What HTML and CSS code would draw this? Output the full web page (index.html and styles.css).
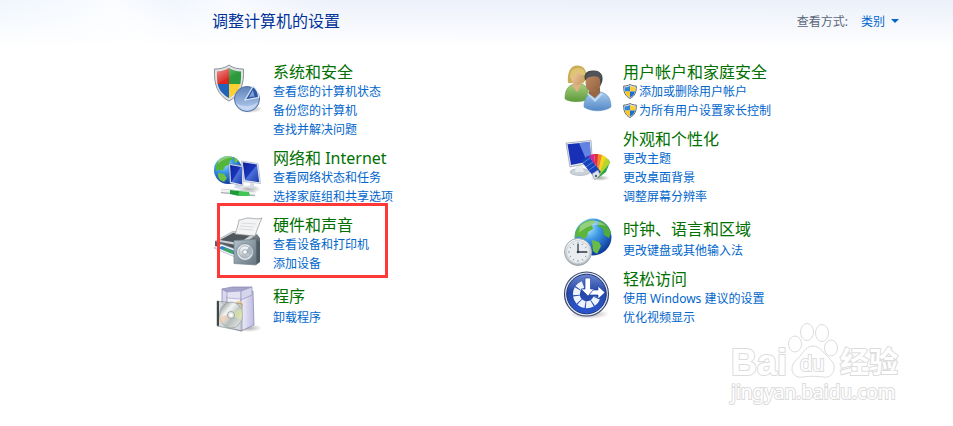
FILE: index.html
```html
<!DOCTYPE html>
<html lang="zh-CN">
<head>
    <meta charset="utf-8">
    <link rel="stylesheet" href="styles.css">
    <title>控制面板</title>
</head>
<body>
    <!-- Shared gradients and the small shield -->
    <svg class="defs" width="0" height="0" aria-hidden="true">
        <defs>
            <radialGradient id="globe" cx="35%" cy="25%" r="80%">
                <stop offset="0" stop-color="#b8ecff"/>
                <stop offset=".4" stop-color="#3f9be6"/>
                <stop offset="1" stop-color="#0b3597"/>
            </radialGradient>
            <linearGradient id="screen" x1="0" y1="0" x2="1" y2="1">
                <stop offset="0" stop-color="#10209a"/>
                <stop offset=".48" stop-color="#1a35ba"/>
                <stop offset=".52" stop-color="#4a70d8"/>
                <stop offset="1" stop-color="#1c3aac"/>
            </linearGradient>
            <linearGradient id="metal" x1="0" y1="0" x2="0" y2="1">
                <stop offset="0" stop-color="#fdfdfe"/>
                <stop offset="1" stop-color="#a9b2bb"/>
            </linearGradient>
            <radialGradient id="shadow">
                <stop offset="0" stop-color="#555" stop-opacity=".5"/>
                <stop offset="1" stop-color="#555" stop-opacity="0"/>
            </radialGradient>
            <symbol id="uac" viewBox="0 0 14 15">
                <path d="M7 .5C9 1.600 11 2 13.300 2c.2 6-1.300 10-6.300 12.500C2 12 .5 8 .7 2 3 2 5 1.600 7 .5z" fill="#dfe4e8" stroke="#656d75"/>
                <path d="M7 2v5.500H2C1.700 6 1.700 4.800 1.700 3.300 4 3.200 5.500 3 7 2z" fill="#2f86dc"/>
                <path d="M7 2v5.500h5c.3-1.500.3-2.700.3-4.200C10 3.200 8.500 3 7 2z" fill="#fdd030"/>
                <path d="M7 7.500v6C4 12 2.500 10 2 7.500z" fill="#fcc61d"/>
                <path d="M7 7.500v6c3-1.500 4.500-3.500 5-6z" fill="#1b6fcb"/>
            </symbol>
        </defs>
    </svg>

    <header class="header">
        <h1>调整计算机的设置</h1>
        <div class="view">
            <label for="viewBy">查看方式:</label>
            <div class="picker">
                <select id="viewBy">
                    <option>类别</option>
                    <option>大图标</option>
                    <option>小图标</option>
                </select>
                <svg class="arrow" width="8" height="4" viewBox="0 0 8 4"><path d="M0 0h8L4 4z" fill="#0066cc"/></svg>
            </div>
        </div>
    </header>

    <main class="categories">
        <div class="column">
            <section class="category">
                <svg class="icon" viewBox="0 0 48 48">
                    <defs>
                        <linearGradient id="disc" x1="0" y1="0" x2="0" y2="1"><stop offset="0" stop-color="#5f82b8"/><stop offset="1" stop-color="#b7d0f1"/></linearGradient>
                        <linearGradient id="gloss" x1="0" y1="0" x2="1" y2="1"><stop offset="0" stop-color="#fff" stop-opacity=".5"/><stop offset=".6" stop-color="#fff" stop-opacity="0"/></linearGradient>
                    </defs>
                    <ellipse cx="37" cy="45" rx="13" ry="4" fill="url(#shadow)"/>
                    <path d="M16 1c4 3 9 4 14.500 4 .8 15-3 26-14.500 32C4.500 31 .7 20 1.500 5 7 5 12 4 16 1z" fill="#dfe2e5" stroke="#8b9196"/>
                    <path d="M16 4v16H4.600C4 16 3.800 12 4 7.500 8.500 7.300 12.500 6.200 16 4z" fill="#da2722"/>
                    <path d="M16 4v16h11.400c.6-4 .8-8 .6-12.500C23.500 7.300 19.500 6.200 16 4z" fill="#2c9a3c"/>
                    <path d="M16 20v14C9.500 30.500 6 26 4.600 20z" fill="#1f63bb"/>
                    <path d="M16 20v14c6.500-3.500 10-8 11.400-14z" fill="#fbd033"/>
                    <path d="M16 4c3.500 2.200 7.500 3.300 12 3.500C20 12 9 17 4.500 20 3.800 16 3.800 12 4 7.500 8.500 7.300 12.500 6.200 16 4z" fill="url(#gloss)"/>
                    <circle cx="34" cy="35" r="12.500" fill="url(#disc)" stroke="#5370a3"/>
                    <path d="M23 39c6 4 16 4 22-1-2 5-6 8-11 8s-9-3-11-7z" fill="#d6e5fa" opacity=".6"/>
                    <path d="M32 36l8-13.500c3 2 5.500 6 5.500 11z" fill="#2e55a2" stroke="#dce9fb" stroke-width="1.200"/>
                    <path d="M36 33l4-7 1.500 6.500z" fill="#7d9fd7"/>
                </svg>
                <div class="text">
                    <h2><a href="#">系统和安全</a></h2>
                    <ul>
                        <li><a href="#">查看您的计算机状态</a></li>
                        <li><a href="#">备份您的计算机</a></li>
                        <li><a href="#">查找并解决问题</a></li>
                    </ul>
                </div>
            </section>

            <section class="category">
                <svg class="icon" viewBox="0 0 48 48">
                    <ellipse cx="36" cy="39" rx="12" ry="4" fill="url(#shadow)"/>
                    <circle cx="15" cy="20" r="14" fill="url(#globe)"/>
                    <path d="M5 11c3-4 8-5.500 13-4.500l3 2-4 2-1 4-4 2-2 4-4-1-3 2c-1-4 0-7 2-10.500z" fill="#55b53b"/>
                    <path d="M5 23l6 1 3 4-3 4-4-2c-2-2-2-4-2-7zM21 7l5 4-4 2z" fill="#6cc243"/>
                    <path d="M5 9c5-5 13-5 18-2-6 0-13 2-18 7z" fill="#fff" opacity=".3"/>
                    <path d="M23 34l5 2v3l-7-1z" fill="#d5dce5"/>
                    <path d="M16 14l14 2v20l-13-3z" fill="#f3f6fa" stroke="#7f8dac" stroke-width=".5"/>
                    <path d="M17 15l12 2v17.500L18 32z" fill="url(#screen)"/>
                    <path d="M37 33l4 .6v3l4 1-8 1-4-1 4-1z" fill="#d5dce5"/>
                    <path d="M28.500 11L45 13.500l2.500 20L31 31.500z" fill="#f3f6fa" stroke="#7f8dac" stroke-width=".5"/>
                    <path d="M29.700 12.300L44 14.500l2.200 17.700L32 30.300z" fill="url(#screen)"/>
                    <path d="M8 41l12 1 22 2" fill="none" stroke="#a3aeb3" stroke-width="4.500"/>
                    <path d="M8 40.500l12 1 22 2" fill="none" stroke="#edf1f2" stroke-width="3"/>
                    <path d="M17 40l9 1 3 2-3 3-9-2z" fill="#1c9c38"/>
                    <path d="M27 41l9 1 1 4-10 0-2-2z" fill="#43c457"/>
                </svg>
                <div class="text">
                    <h2><a href="#">网络和 Internet</a></h2>
                    <ul>
                        <li><a href="#">查看网络状态和任务</a></li>
                        <li><a href="#">选择家庭组和共享选项</a></li>
                    </ul>
                </div>
            </section>

            <section class="category marked">
                <svg class="icon" viewBox="0 0 48 48">
                    <defs>
                        <linearGradient id="body" x1="0" y1="0" x2="0" y2="1"><stop offset="0" stop-color="#8b949b"/><stop offset="1" stop-color="#353b41"/></linearGradient>
                        <linearGradient id="box" x1="0" y1="0" x2="1" y2="1"><stop offset="0" stop-color="#b3c1cb"/><stop offset="1" stop-color="#64747f"/></linearGradient>
                    </defs>
                    <path d="M2 24L20 14l24 3 3 4v10l-10 4L2 29z" fill="url(#body)"/>
                    <path d="M2 24L20 14l24 3-16 12z" fill="#c9ced2"/>
                    <path d="M7 23l13-7 18 2-12 8z" fill="#50575d"/>
                    <path d="M1 31l7-4 14 5v8z" fill="#f4f6f7" stroke="#9ba1a6" stroke-width=".6"/>
                    <path d="M5 31l4-2 13 5v4z" fill="#2b7dcc"/>
                    <path d="M12 31l8 3v3l-10-4z" fill="#43a757"/>
                    <path d="M26 3c3 0 6-2 9-2 5 0 9 2 14 0-3 6-5 12-7 18l-20-2c2-5 3-9 4-14z" fill="#f4f4f4" stroke="#8d9499" stroke-width=".7"/>
                    <path d="M28 6l15 1M27 9l14 1M26 12l14 1" stroke="#d9dde0"/>
                    <path d="M43 23l4 2v20l-4 3z" fill="#4e5b64"/>
                    <path d="M21 23.500l22-1V48l-22-1.500z" fill="url(#box)" stroke="#74828c" stroke-width=".7"/>
                    <circle cx="32" cy="35" r="8.500" fill="#dce2e6" stroke="#7f8d96"/>
                    <circle cx="32" cy="35" r="6" fill="url(#metal)" stroke="#9da8b0" stroke-width=".7"/>
                    <path d="M32 35l5-6c3 3 3 7 1 9z" fill="#aab5be"/>
                    <circle cx="32" cy="35" r="2.300" fill="#f9fafb" stroke="#7b8891" stroke-width=".6"/>
                </svg>
                <div class="text">
                    <h2><a href="#">硬件和声音</a></h2>
                    <ul>
                        <li><a href="#">查看设备和打印机</a></li>
                        <li><a href="#">添加设备</a></li>
                    </ul>
                </div>
            </section>

            <section class="category single">
                <svg class="icon" viewBox="0 0 48 48">
                    <defs>
                        <linearGradient id="cd" x1="0" y1="0" x2="1" y2="1"><stop offset="0" stop-color="#6d7578"/><stop offset=".35" stop-color="#f3f5f3"/><stop offset=".6" stop-color="#b5bdba"/><stop offset="1" stop-color="#f6f7f5"/></linearGradient>
                        <linearGradient id="carton" x1="0" y1="0" x2="1" y2="0"><stop offset="0" stop-color="#f0effa"/><stop offset="1" stop-color="#bdbbe0"/></linearGradient>
                    </defs>
                    <ellipse cx="35" cy="44" rx="14" ry="4" fill="url(#shadow)"/>
                    <path d="M9 5l7 3v12H9z" fill="#d8d7ee" stroke="#8e8db5" stroke-width=".8"/>
                    <path d="M9 5l10-2 20 0-13 5-10 1z" fill="#a5a4cb" stroke="#8e8db5" stroke-width=".8"/>
                    <path d="M14 12l14 1V47l-14-4z" fill="#f3f2fb" stroke="#8e8db5" stroke-width=".8"/>
                    <path d="M28 13l12-6 1 34-13 6z" fill="url(#carton)" stroke="#8e8db5" stroke-width=".8"/>
                    <path d="M14 8l14-1v8l-14-1z" fill="#e3e2f3" stroke="#9a99c0" stroke-width=".6"/>
                    <path d="M28 7l11-4v8l-11 5z" fill="#d5d4ec" stroke="#9a99c0" stroke-width=".8"/>
                    <circle cx="26" cy="21" r="4" fill="#f0c587" opacity=".8"/>
                    <path d="M4 17l25 3v27L4 42z" fill="#c7cecf" opacity=".75" stroke="#747d80" stroke-width=".8"/>
                    <path d="M4 17l2 .3V42l-2-.4z" fill="#3f4749"/>
                    <ellipse cx="18" cy="31" rx="11.500" ry="13" fill="url(#cd)" stroke="#8d9696" stroke-width=".6"/>
                    <path d="M18 31l10-7c2 4 2 8 0 12z" fill="#dfe9a5" opacity=".65"/>
                    <path d="M18 31L9 40c-2-2-3-5-2.500-8z" fill="#f4c6a5" opacity=".6"/>
                    <circle cx="18" cy="31" r="3.500" fill="#e8ebeb" stroke="#8d9696" stroke-width=".8"/>
                    <circle cx="18" cy="31" r="1.200" fill="#fff"/>
                </svg>
                <div class="text">
                    <h2><a href="#">程序</a></h2>
                    <ul>
                        <li><a href="#">卸载程序</a></li>
                    </ul>
                </div>
            </section>
        </div>

        <div class="column">
            <section class="category">
                <svg class="icon" viewBox="0 0 48 48">
                    <defs>
                        <linearGradient id="green" x1="0" y1="0" x2="0" y2="1"><stop offset="0" stop-color="#a8cf7c"/><stop offset="1" stop-color="#5c9a3a"/></linearGradient>
                        <linearGradient id="blue" x1="0" y1="0" x2="0" y2="1"><stop offset="0" stop-color="#a7cbee"/><stop offset="1" stop-color="#5389c6"/></linearGradient>
                        <linearGradient id="face" x1="0" y1="0" x2="1" y2="1"><stop offset="0" stop-color="#f7d9b3"/><stop offset="1" stop-color="#c7935e"/></linearGradient>
                        <linearGradient id="tan" x1="0" y1="0" x2="1" y2="1"><stop offset="0" stop-color="#c08c62"/><stop offset="1" stop-color="#8f6040"/></linearGradient>
                    </defs>
                    <path d="M2 35c0-8 2-13 9-15h8c5 2 7 7 7 15-6 3-18 4-24 0z" fill="url(#green)" stroke="#6a9a48" stroke-width=".6"/>
                    <path d="M5 19C4 9 7 1 15 1.500c7 .5 9 6 8 14l-3 4z" fill="#c9ad58"/>
                    <path d="M10 19h8l-1 5-3 4-4-5z" fill="#ddb184"/>
                    <ellipse cx="14" cy="13" rx="6" ry="8" fill="url(#face)"/>
                    <path d="M7 14c0-8 4-10 9-10 4 0 6 3 6 7-5 0-7-2-8-4-1 4-3 6-7 7z" fill="#dfc573"/>
                    <path d="M21 43c0-8 3-13 10-15h7c7 2 10 7 10 15-7 5-20 5-27 0z" fill="url(#blue)" stroke="#5c8fc6" stroke-width=".6"/>
                    <path d="M26 24h11v5l-5 5-6-4z" fill="#986642"/>
                    <path d="M22 16C20 9 25 6 31 6.500c7 .5 10 5 8 12l-3 6z" fill="#44474a"/>
                    <ellipse cx="30" cy="19" rx="7.500" ry="9.500" fill="url(#tan)"/>
                    <path d="M23 15c0-6 4-8 9-8 5 0 7 4 6 8-5-4-10-3-15 0z" fill="#505458"/>
                    <path d="M25 29l7 6 6-6 2 1-8 8-8-8z" fill="#c3dcf6"/>
                </svg>
                <div class="text">
                    <h2><a href="#">用户帐户和家庭安全</a></h2>
                    <ul>
                        <li><a class="admin" href="#"><svg class="shield"><use href="#uac"/></svg>添加或删除用户帐户</a></li>
                        <li><a class="admin" href="#"><svg class="shield"><use href="#uac"/></svg>为所有用户设置家长控制</a></li>
                    </ul>
                </div>
            </section>

            <section class="category">
                <svg class="icon" viewBox="0 0 48 48">
                    <ellipse cx="17" cy="41" rx="10" ry="3.500" fill="#c9d1d8" stroke="#a4adb5" stroke-width=".6"/>
                    <path d="M13 34h6l2 7h-9z" fill="#e8ecef"/>
                    <path d="M3 12l25-2.500 1.500 22L7 36z" fill="#e6ebf0" stroke="#9aa5b1" stroke-width=".8"/>
                    <path d="M4.500 13.200l22.300-2.200 1.300 19L8 34z" fill="#1730b5"/>
                    <path d="M16 12.100l10.800-1.100 1.300 19-4 .8z" fill="#7598ed" opacity=".8"/>
                    <ellipse cx="37" cy="47" rx="10" ry="3" fill="url(#shadow)"/>
                    <path d="M34 48l9-7 4-10-2-3z" fill="#2da34a"/>
                    <path d="M34 47l8-21 3 2 2 4z" fill="#b6d52f"/>
                    <path d="M34 47l5-23 4 2z" fill="#f8d51e"/>
                    <path d="M34 47l1-24 4 1z" fill="#f08a22"/>
                    <path d="M34 47l-3-24h4z" fill="#e2312a"/>
                    <path d="M34 47l-7-23 4-1z" fill="#d72589"/>
                    <path d="M34 47l-11-21 4-2z" fill="#8530b7"/>
                    <path d="M18 30l7-5 13 16-7 5z" fill="#1743bd"/>
                    <path d="M20 32l7-5M23 36l7-5M26 39l7-5" stroke="#6c93ea" stroke-width=".8"/>
                    <path d="M29 43l6-4 2 5-5 5z" fill="#dde4ec" stroke="#8c96a4" stroke-width=".6"/>
                    <circle cx="33" cy="45" r="1.200" fill="#58606c"/>
                </svg>
                <div class="text">
                    <h2><a href="#">外观和个性化</a></h2>
                    <ul>
                        <li><a href="#">更改主题</a></li>
                        <li><a href="#">更改桌面背景</a></li>
                        <li><a href="#">调整屏幕分辨率</a></li>
                    </ul>
                </div>
            </section>

            <section class="category single">
                <svg class="icon" viewBox="0 0 48 48">
                    <circle cx="30" cy="20" r="18.500" fill="url(#globe)"/>
                    <path d="M14 12c4-6 9-9 16-9l3 2-4 3 1 4-5 3-1 5-4 2-3-3-5 2c0-4 0-6 2-9z" fill="#5db63c"/>
                    <path d="M36 3c6 2 10 7 12 13l-2 5-5-3-1-6-5-3z" fill="#4fab3b"/>
                    <path d="M29 23l7 2 2 4-4 8-4-3z" fill="#69bd45"/>
                    <path d="M17 9c7-7 19-7 26 0-9-3-19-1-27 7z" fill="#fff" opacity=".35"/>
                    <circle cx="15" cy="35" r="13.500" fill="url(#metal)" stroke="#a3acb2"/>
                    <circle cx="15" cy="35" r="11.500" fill="#e9edf0" stroke="#c2c9ce" stroke-width=".7"/>
                    <path d="M15 25v2M15 43v2M5 35h2M23 35h2M20 26.500l-1 1.500M10 26.500l1 1.500M20 43.500l-1-1.500M10 43.500l1-1.500M6.500 30l1.500 1M23.500 30l-1.500 1M6.500 40l1.500-1M23.500 40l-1.500-1" stroke="#7c868e" stroke-width=".8"/>
                    <path d="M15 27v8h9" fill="none" stroke="#303b45" stroke-width="1.300"/>
                    <circle cx="15" cy="35" r="1.300" fill="#303b45"/>
                </svg>
                <div class="text">
                    <h2><a href="#">时钟、语言和区域</a></h2>
                    <ul>
                        <li><a href="#">更改键盘或其他输入法</a></li>
                    </ul>
                </div>
            </section>

            <section class="category">
                <svg class="icon" viewBox="0 0 48 48">
                    <defs>
                        <linearGradient id="ease" x1="0" y1="0" x2="0" y2="1"><stop offset="0" stop-color="#6c87cd"/><stop offset=".45" stop-color="#2446a6"/><stop offset="1" stop-color="#2a57cf"/></linearGradient>
                    </defs>
                    <ellipse cx="26" cy="43" rx="20" ry="5" fill="url(#shadow)"/>
                    <circle cx="23.500" cy="23" r="22" fill="#e4e8ef" stroke="#39486e" stroke-width="1.200"/>
                    <circle cx="23.500" cy="23" r="19.800" fill="url(#ease)" stroke="#1c347f"/>
                    <path d="M20 13.500A10.500 10.500 0 1 0 34 26" fill="none" stroke="#eef2fb" stroke-width="7" stroke-dasharray="6 1"/>
                    <path d="M22 7h5.500v11h4l-6.500 7-7-7h4z" fill="#fff" stroke="#2446a6" stroke-width=".7"/>
                    <path d="M26 24l4-5h5v-4l7 6.500-7 6.500v-4z" fill="#fff" stroke="#2446a6" stroke-width=".7"/>
                </svg>
                <div class="text">
                    <h2><a href="#">轻松访问</a></h2>
                    <ul>
                        <li><a href="#">使用 Windows 建议的设置</a></li>
                        <li><a href="#">优化视频显示</a></li>
                    </ul>
                </div>
            </section>
        </div>
    </main>

    <svg class="watermark" width="180" height="90" viewBox="0 0 180 90">
        <text class="brand" x="6" y="57">Bai</text>
        <ellipse cx="70" cy="26" rx="6.500" ry="8"/>
        <ellipse cx="82" cy="14" rx="6.500" ry="8.500"/>
        <ellipse cx="97" cy="15" rx="6.500" ry="8.500"/>
        <ellipse cx="106" cy="30" rx="6.500" ry="8"/>
        <path d="M88 28c6 0 9 5 13 9 5 5 9 8 8 14-1 7-6 9-11 8-7-1-13-1-20 0-6 1-11-2-11-8 0-7 5-9 9-14 3-4 6-9 12-9z"/>
        <text class="du" x="75" y="53">du</text>
        <text class="cjk" x="115" y="55">经验</text>
        <text class="site" x="6" y="81">jingyan.baidu.com</text>
    </svg>
</body>
</html>
```
FILE: styles.css
```css
body {margin: 0; position: relative; min-height: 100vh; background-color: #fff; font-family: "Noto Sans", "Noto Sans CJK SC", sans-serif; font-size: 12px; line-height: 19px;}
h1, h2, ul {margin: 0; padding: 0; font-weight: normal;}
ul {list-style: none;}
a {color: #0066cc; text-decoration: none;}
a:hover {text-decoration: underline;}
.defs {position: absolute;}

.header {display: flex; justify-content: space-between; align-items: center; height: 42px; padding: 0 54px 6px 212px; background: linear-gradient(to bottom, rgba(255,255,255,0), #fff), linear-gradient(62deg, #eef5fd 0%, #fafcff 14%, #f1f6fd 20%, #f8faff 26%, #edf1fb 36%, #ebf0fa 100%);}
.header h1 {color: #003399; font-size: 16px; line-height: 24px;}
.view {display: flex; align-items: center; gap: 13px;}
.view label {color: #5a6778;}
.picker {display: flex; align-items: center; position: relative;}
.picker select {appearance: none; width: 38px; margin: 0; padding: 0; border: 0; background: none; color: #0066cc; font: inherit;}
.arrow {position: absolute; right: 0; pointer-events: none;}

.categories {display: grid; grid-template-columns: 350px 1fr; padding: 14px 40px 0 213px;}
.column {display: flex; flex-direction: column; gap: 9px;}
.category {display: flex; gap: 12px; position: relative;}
.icon {flex: none; width: 48px; height: 48px; margin-top: 2px; overflow: visible;}
.category h2 {font-size: 16px; line-height: 20px;}
.category h2 a {color: #007000;}
.single {height: 45px;}
.single .text {padding-top: 4px;}
.single h2 {margin-bottom: 2px;}
.admin {display: flex; align-items: center; gap: 2px;}
.shield {width: 14px; height: 15px;}
.marked::after {content: ""; position: absolute; left: 4px; top: -12px; width: 165px; height: 69px; border: 3px solid #ff3838;}

.watermark {position: absolute; right: 48px; bottom: 18px; fill: #fff; stroke: #dcdcdc; stroke-width: 1px;}
.watermark text {paint-order: stroke; stroke-width: 2px;}
.brand {font: bold 36px "Liberation Sans", sans-serif;}
.du {font: 22px "Liberation Sans", sans-serif;}
.cjk {font: bold 29px "Noto Sans CJK SC", sans-serif;}
.site {font: 19px "Noto Sans", sans-serif;}
```
